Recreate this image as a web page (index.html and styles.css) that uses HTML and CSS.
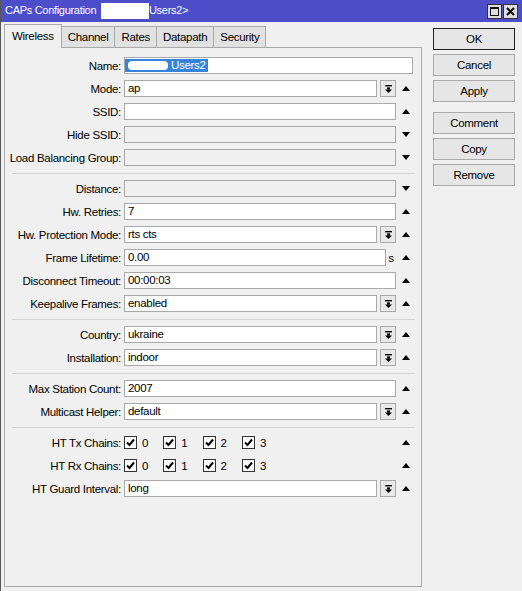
FILE: index.html
```html
<!DOCTYPE html>
<html lang="en">

<head>
    <meta charset="UTF-8">
    <meta name="viewport" content="width=device-width, initial-scale=1.0">
    <title>CAPs Configuration</title>
    <link rel="stylesheet" href="styles.css">
</head>

<body>
    <div class="window">
        <div class="titlebar">
            <span class="title">CAPs Configuration <span class="hidden-name">&lt;</span>Users2&gt;</span>
            <div class="win-buttons">
                <span class="win-btn"><span class="max-icon"></span></span>
                <span class="win-btn">
                    <svg width="9" height="9" viewBox="0 0 9 9"><path d="M1 1L8 8M8 1L1 8" stroke="#111" stroke-width="2.2"/></svg>
                </span>
            </div>
        </div>

        <div class="main">
            <div class="left">
                <div class="tabs">
                    <span class="tab active">Wireless</span>
                    <span class="tab">Channel</span>
                    <span class="tab">Rates</span>
                    <span class="tab">Datapath</span>
                    <span class="tab">Security</span>
                </div>

                <div class="panel">
                    <div class="row">
                        <label>Name:</label>
                        <div class="field wide"><span class="sel"><span class="blot"></span>Users2</span></div>
                    </div>
                    <div class="row">
                        <label>Mode:</label>
                        <div class="combo">
                            <div class="field">ap</div>
                            <span class="drop"><svg width="7" height="8" viewBox="0 0 7 8"><rect x="0" y="0" width="7" height="1.4"/><rect x="2" y="2.4" width="3" height="2.2"/><path d="M0 4.4H7L3.5 8Z"/></svg></span>
                        </div>
                        <span class="arrow up"></span>
                    </div>
                    <div class="row">
                        <label>SSID:</label>
                        <div class="field"></div>
                        <span class="arrow up"></span>
                    </div>
                    <div class="row">
                        <label>Hide SSID:</label>
                        <div class="field off"></div>
                        <span class="arrow down"></span>
                    </div>
                    <div class="row">
                        <label>Load Balancing Group:</label>
                        <div class="field off"></div>
                        <span class="arrow down"></span>
                    </div>

                    <div class="sep"></div>

                    <div class="row">
                        <label>Distance:</label>
                        <div class="field off"></div>
                        <span class="arrow down"></span>
                    </div>
                    <div class="row">
                        <label>Hw. Retries:</label>
                        <div class="field">7</div>
                        <span class="arrow up"></span>
                    </div>
                    <div class="row">
                        <label>Hw. Protection Mode:</label>
                        <div class="combo">
                            <div class="field">rts cts</div>
                            <span class="drop"><svg width="7" height="8" viewBox="0 0 7 8"><rect x="0" y="0" width="7" height="1.4"/><rect x="2" y="2.4" width="3" height="2.2"/><path d="M0 4.4H7L3.5 8Z"/></svg></span>
                        </div>
                        <span class="arrow up"></span>
                    </div>
                    <div class="row">
                        <label>Frame Lifetime:</label>
                        <div class="unit-field">
                            <div class="field">0.00</div>
                            <span class="unit">s</span>
                        </div>
                        <span class="arrow up"></span>
                    </div>
                    <div class="row">
                        <label>Disconnect Timeout:</label>
                        <div class="field">00:00:03</div>
                        <span class="arrow up"></span>
                    </div>
                    <div class="row">
                        <label>Keepalive Frames:</label>
                        <div class="combo">
                            <div class="field">enabled</div>
                            <span class="drop"><svg width="7" height="8" viewBox="0 0 7 8"><rect x="0" y="0" width="7" height="1.4"/><rect x="2" y="2.4" width="3" height="2.2"/><path d="M0 4.4H7L3.5 8Z"/></svg></span>
                        </div>
                        <span class="arrow up"></span>
                    </div>

                    <div class="sep"></div>

                    <div class="row">
                        <label>Country:</label>
                        <div class="combo">
                            <div class="field">ukraine</div>
                            <span class="drop"><svg width="7" height="8" viewBox="0 0 7 8"><rect x="0" y="0" width="7" height="1.4"/><rect x="2" y="2.4" width="3" height="2.2"/><path d="M0 4.4H7L3.5 8Z"/></svg></span>
                        </div>
                        <span class="arrow up"></span>
                    </div>
                    <div class="row">
                        <label>Installation:</label>
                        <div class="combo">
                            <div class="field">indoor</div>
                            <span class="drop"><svg width="7" height="8" viewBox="0 0 7 8"><rect x="0" y="0" width="7" height="1.4"/><rect x="2" y="2.4" width="3" height="2.2"/><path d="M0 4.4H7L3.5 8Z"/></svg></span>
                        </div>
                        <span class="arrow up"></span>
                    </div>

                    <div class="sep"></div>

                    <div class="row">
                        <label>Max Station Count:</label>
                        <div class="field">2007</div>
                        <span class="arrow up"></span>
                    </div>
                    <div class="row">
                        <label>Multicast Helper:</label>
                        <div class="combo">
                            <div class="field">default</div>
                            <span class="drop"><svg width="7" height="8" viewBox="0 0 7 8"><rect x="0" y="0" width="7" height="1.4"/><rect x="2" y="2.4" width="3" height="2.2"/><path d="M0 4.4H7L3.5 8Z"/></svg></span>
                        </div>
                        <span class="arrow up"></span>
                    </div>

                    <div class="sep"></div>

                    <div class="row">
                        <label>HT Tx Chains:</label>
                        <div class="checks">
                            <span class="check"><span class="box"><svg width="9" height="9" viewBox="0 0 9 9"><path d="M1 4.5L3.5 7L8 1.5" fill="none" stroke="#000" stroke-width="2"/></svg></span>0</span>
                            <span class="check"><span class="box"><svg width="9" height="9" viewBox="0 0 9 9"><path d="M1 4.5L3.5 7L8 1.5" fill="none" stroke="#000" stroke-width="2"/></svg></span>1</span>
                            <span class="check"><span class="box"><svg width="9" height="9" viewBox="0 0 9 9"><path d="M1 4.5L3.5 7L8 1.5" fill="none" stroke="#000" stroke-width="2"/></svg></span>2</span>
                            <span class="check"><span class="box"><svg width="9" height="9" viewBox="0 0 9 9"><path d="M1 4.5L3.5 7L8 1.5" fill="none" stroke="#000" stroke-width="2"/></svg></span>3</span>
                        </div>
                        <span class="arrow up"></span>
                    </div>
                    <div class="row">
                        <label>HT Rx Chains:</label>
                        <div class="checks">
                            <span class="check"><span class="box"><svg width="9" height="9" viewBox="0 0 9 9"><path d="M1 4.5L3.5 7L8 1.5" fill="none" stroke="#000" stroke-width="2"/></svg></span>0</span>
                            <span class="check"><span class="box"><svg width="9" height="9" viewBox="0 0 9 9"><path d="M1 4.5L3.5 7L8 1.5" fill="none" stroke="#000" stroke-width="2"/></svg></span>1</span>
                            <span class="check"><span class="box"><svg width="9" height="9" viewBox="0 0 9 9"><path d="M1 4.5L3.5 7L8 1.5" fill="none" stroke="#000" stroke-width="2"/></svg></span>2</span>
                            <span class="check"><span class="box"><svg width="9" height="9" viewBox="0 0 9 9"><path d="M1 4.5L3.5 7L8 1.5" fill="none" stroke="#000" stroke-width="2"/></svg></span>3</span>
                        </div>
                        <span class="arrow up"></span>
                    </div>
                    <div class="row">
                        <label>HT Guard Interval:</label>
                        <div class="combo">
                            <div class="field">long</div>
                            <span class="drop"><svg width="7" height="8" viewBox="0 0 7 8"><rect x="0" y="0" width="7" height="1.4"/><rect x="2" y="2.4" width="3" height="2.2"/><path d="M0 4.4H7L3.5 8Z"/></svg></span>
                        </div>
                        <span class="arrow up"></span>
                    </div>
                </div>
            </div>

            <div class="side">
                <button class="default">OK</button>
                <button>Cancel</button>
                <button>Apply</button>
                <button class="gap">Comment</button>
                <button>Copy</button>
                <button>Remove</button>
            </div>
        </div>
    </div>
</body>

</html>
```

FILE: styles.css
```css
:root {
    --bg: #f0f0f0;
    --title: #4b4ec8;
    --border: #a9a9a9;
    --line: #d4d4d4;
    --font: 'Liberation Sans', Arial, sans-serif;
}

body {
    margin: 0;
    background-color: var(--bg);
    font-family: var(--font);
    font-size: 11.5px;
    letter-spacing: -0.3px;
    color: #000;
}

.window {
    width: 522px;
    height: 591px;
    border-left: 1px solid #555;
    box-sizing: border-box;
}

.titlebar {
    height: 22px;
    background-color: var(--title);
    color: #fff;
    display: flex;
    align-items: center;
    justify-content: space-between;
    padding-left: 4px;
}

.title {
    font-size: 11px;
}

.hidden-name {
    display: inline-block;
    width: 48px;
    height: 16px;
    margin-left: 2px;
    background-color: #fff;
    color: #fff;
    vertical-align: middle;
}

.win-buttons {
    display: flex;
    gap: 1px;
    margin-right: 4px;
    margin-top: 1px;
}

.win-btn {
    width: 13px;
    height: 13px;
    border: 1px solid #333;
    background-color: #dedede;
    display: flex;
    align-items: center;
    justify-content: center;
}

.max-icon {
    width: 7px;
    height: 6px;
    border: 1px solid #111;
    border-top-width: 2px;
}

.main {
    display: flex;
}

.left {
    width: 418px;
    margin-left: 3px;
}

.tabs {
    display: flex;
    align-items: flex-end;
    height: 25px;
}

.tab {
    height: 20px;
    line-height: 20px;
    padding: 0 6px;
    border: 1px solid var(--border);
    border-bottom: none;
    border-left: none;
    background-color: #e1e1e1;
}

.tab.active {
    height: 23px;
    line-height: 23px;
    padding: 0 7px;
    border-left: 1px solid var(--border);
    background-color: var(--bg);
    margin-bottom: -1px;
    position: relative;
}

.panel {
    border: 1px solid var(--border);
    padding-top: 6px;
    box-sizing: border-box;
    height: 540px;
}

.row {
    display: flex;
    align-items: center;
    height: 23px;
}

.row label {
    width: 116px;
    padding-right: 3px;
    text-align: right;
    white-space: nowrap;
}

.field {
    width: 272px;
    height: 17px;
    box-sizing: border-box;
    border: 1px solid var(--border);
    background-color: #fff;
    padding-left: 3px;
    line-height: 15px;
    overflow: hidden;
    white-space: nowrap;
}

.field.off {
    background-color: var(--bg);
}

.field.wide {
    width: 289px;
    padding-left: 0;
    padding-top: 1px;
    line-height: 13px;
}

.sel {
    display: inline-block;
    background-color: #3584d9;
    color: #fff;
    padding-right: 2px;
    height: 13px;
}

.blot {
    display: inline-block;
    width: 40px;
    height: 9px;
    margin: 2px 3px 0 3px;
    border-radius: 4px;
    background-color: #fff;
    vertical-align: top;
}

.combo {
    display: flex;
    gap: 3px;
    width: 272px;
}

.combo .field {
    width: 253px;
}

.drop {
    width: 16px;
    height: 17px;
    box-sizing: border-box;
    border: 1px solid var(--border);
    background-color: #e9e9e9;
    display: flex;
    align-items: center;
    justify-content: center;
}

.unit-field {
    display: flex;
    align-items: center;
    width: 272px;
}

.unit-field .field {
    width: 262px;
}

.unit {
    width: 10px;
    text-align: center;
}

.arrow {
    width: 20px;
    height: 5px;
    position: relative;
}

.arrow::after {
    content: "";
    position: absolute;
    left: 6px;
    top: 0;
    border-left: 4.5px solid transparent;
    border-right: 4.5px solid transparent;
}

.arrow.up::after {
    border-bottom: 5px solid #000;
}

.arrow.down::after {
    border-top: 5px solid #000;
}

.sep {
    height: 8px;
    display: flex;
    align-items: center;
}

.sep::before {
    content: "";
    margin-left: 7px;
    width: 403px;
    border-top: 1px solid var(--line);
}

.checks {
    display: flex;
    width: 272px;
}

.check {
    display: flex;
    align-items: center;
    gap: 5px;
    width: 39.3px;
}

.check .box {
    width: 11px;
    height: 11px;
    border: 1px solid #333;
    background-color: #fff;
    display: flex;
    align-items: center;
    justify-content: center;
}

.side {
    margin-left: 11px;
    padding-top: 6px;
    display: flex;
    flex-direction: column;
    gap: 4px;
}

button {
    width: 82px;
    height: 22px;
    border: 1px solid var(--border);
    background-color: #e6e6e6;
    font-family: inherit;
    font-size: 11.5px;
    letter-spacing: -0.3px;
    padding: 0;
    color: #000;
}

button.default {
    border-color: #222;
}

button.gap {
    margin-top: 6px;
}
```
